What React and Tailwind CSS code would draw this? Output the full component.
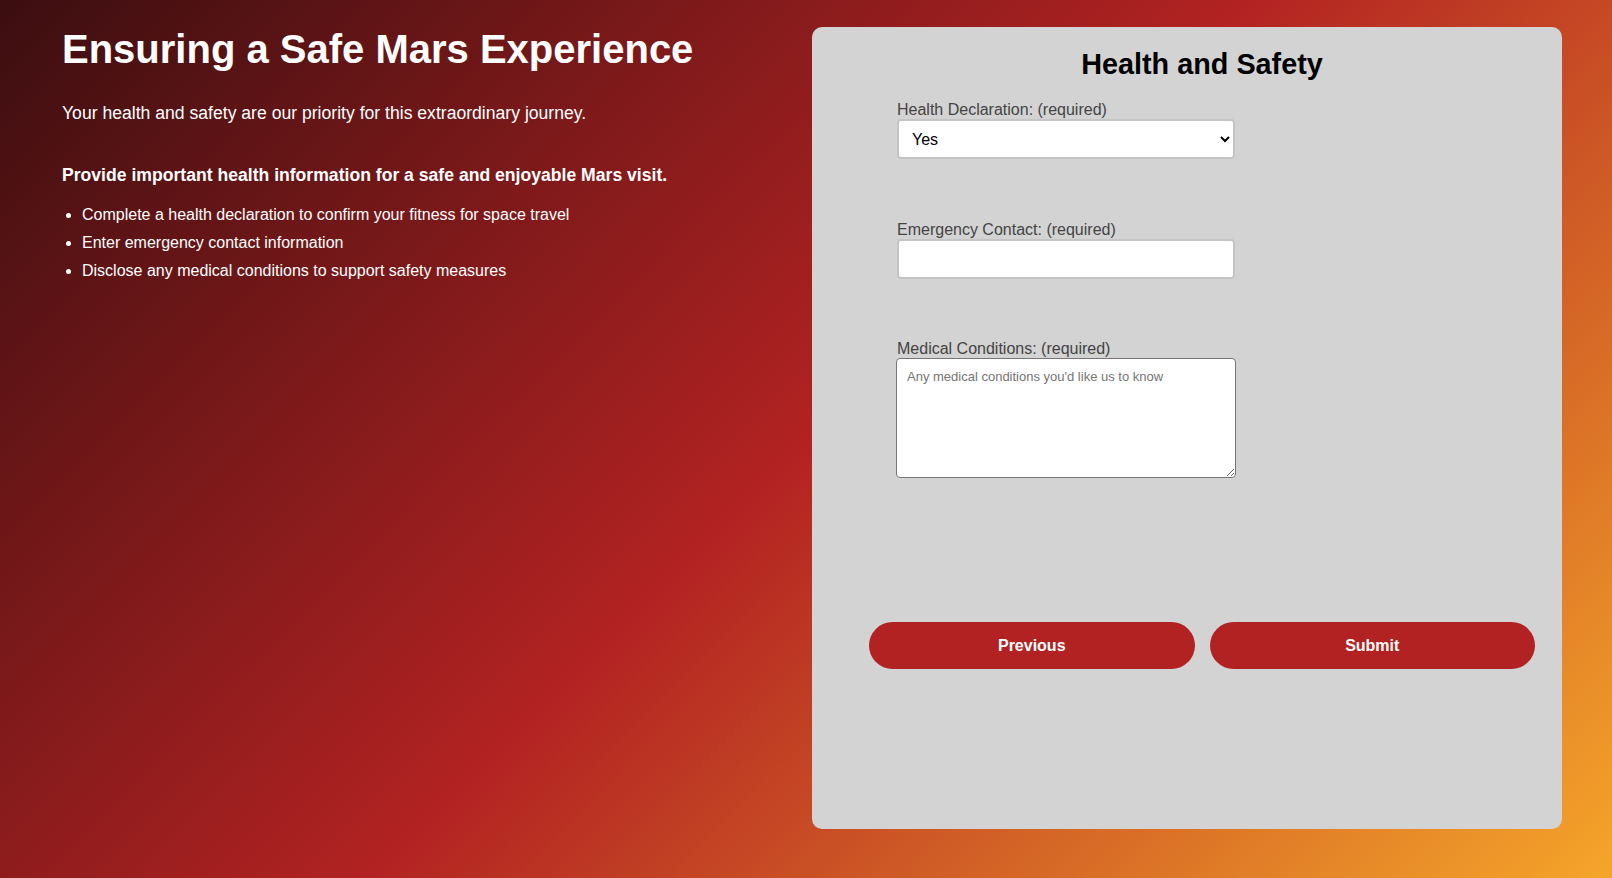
const fields = [
  { label: "Health Declaration: (required)", kind: "select" },
  { label: "Emergency Contact: (required)", kind: "input" },
  { label: "Medical Conditions: (required)", kind: "textarea" },
];

const HealthForm = () => {
  return (
    <div className="w-[750px] h-[802px] mt-[27px] mr-[50px] shrink-0 rounded-[10px] bg-[#d3d3d3] pt-[21px] pl-[57px] pr-[27px]">
      <h2 className="text-[28.8px] font-bold text-black text-center leading-[normal]">
        Health and Safety
      </h2>

      <div className="mt-[19px] ml-[28px]">
        <label className="block text-[16px] leading-[19px] text-[#444]">
          {fields[0].label}
        </label>
        <select
          defaultValue="Yes"
          className="block w-[338px] h-[40px] rounded-[4px] border-2 border-[#c4c4c4] bg-white pl-[9px] pr-[8px] text-[16px] text-black"
        >
          <option>Yes</option>
          <option>No</option>
        </select>

        <label className="block mt-[61px] text-[16px] leading-[19px] text-[#444]">
          {fields[1].label}
        </label>
        <input
          type="text"
          className="block w-[338px] h-[40px] rounded-[4px] border-2 border-[#c4c4c4] bg-white px-[12px] text-[16px]"
        />

        <label className="block mt-[60px] text-[16px] leading-[19px] text-[#444]">
          {fields[2].label}
        </label>
        <textarea
          placeholder="Any medical conditions you'd like us to know"
          className="block w-[340px] h-[120px] -ml-[1px] rounded-[4px] border border-[#767676] bg-white px-[10px] py-[8px] text-[13px] placeholder:text-[#757575]"
        />
      </div>

      <div className="mt-[144px] flex gap-[15px]">
        <button className="flex-1 h-[47px] rounded-full bg-[#b22222] text-white text-[16px] font-bold">
          Previous
        </button>
        <button className="flex-1 h-[47px] rounded-full bg-[#b22222] text-white text-[16px] font-bold">
          Submit
        </button>
      </div>
    </div>
  );
};

const App = () => {
  return (
    <div
      className="w-full min-h-[878px] flex justify-between bg-[linear-gradient(135deg,#3b0e10_0%,#b22222_50%,#f5a52a_100%)] font-['Liberation_Sans',Arial,sans-serif]"
    >
      <div className="pl-[62px] pt-[27px] text-white">
        <h1 className="text-[40px] font-bold leading-[normal]">
          Ensuring a Safe Mars Experience
        </h1>
        <p className="mt-[31px] text-[17.6px] leading-[normal]">
          Your health and safety are our priority for this extraordinary journey.
        </p>
        <p className="mt-[41px] text-[17.6px] font-bold leading-[normal]">
          Provide important health information for a safe and enjoyable Mars visit.
        </p>
        <ul className="mt-[15px] list-disc pl-[20px] text-[16px] leading-[28px]">
          <li>Complete a health declaration to confirm your fitness for space travel</li>
          <li>Enter emergency contact information</li>
          <li>Disclose any medical conditions to support safety measures</li>
        </ul>
      </div>
      <HealthForm />
    </div>
  );
};

export default App;
